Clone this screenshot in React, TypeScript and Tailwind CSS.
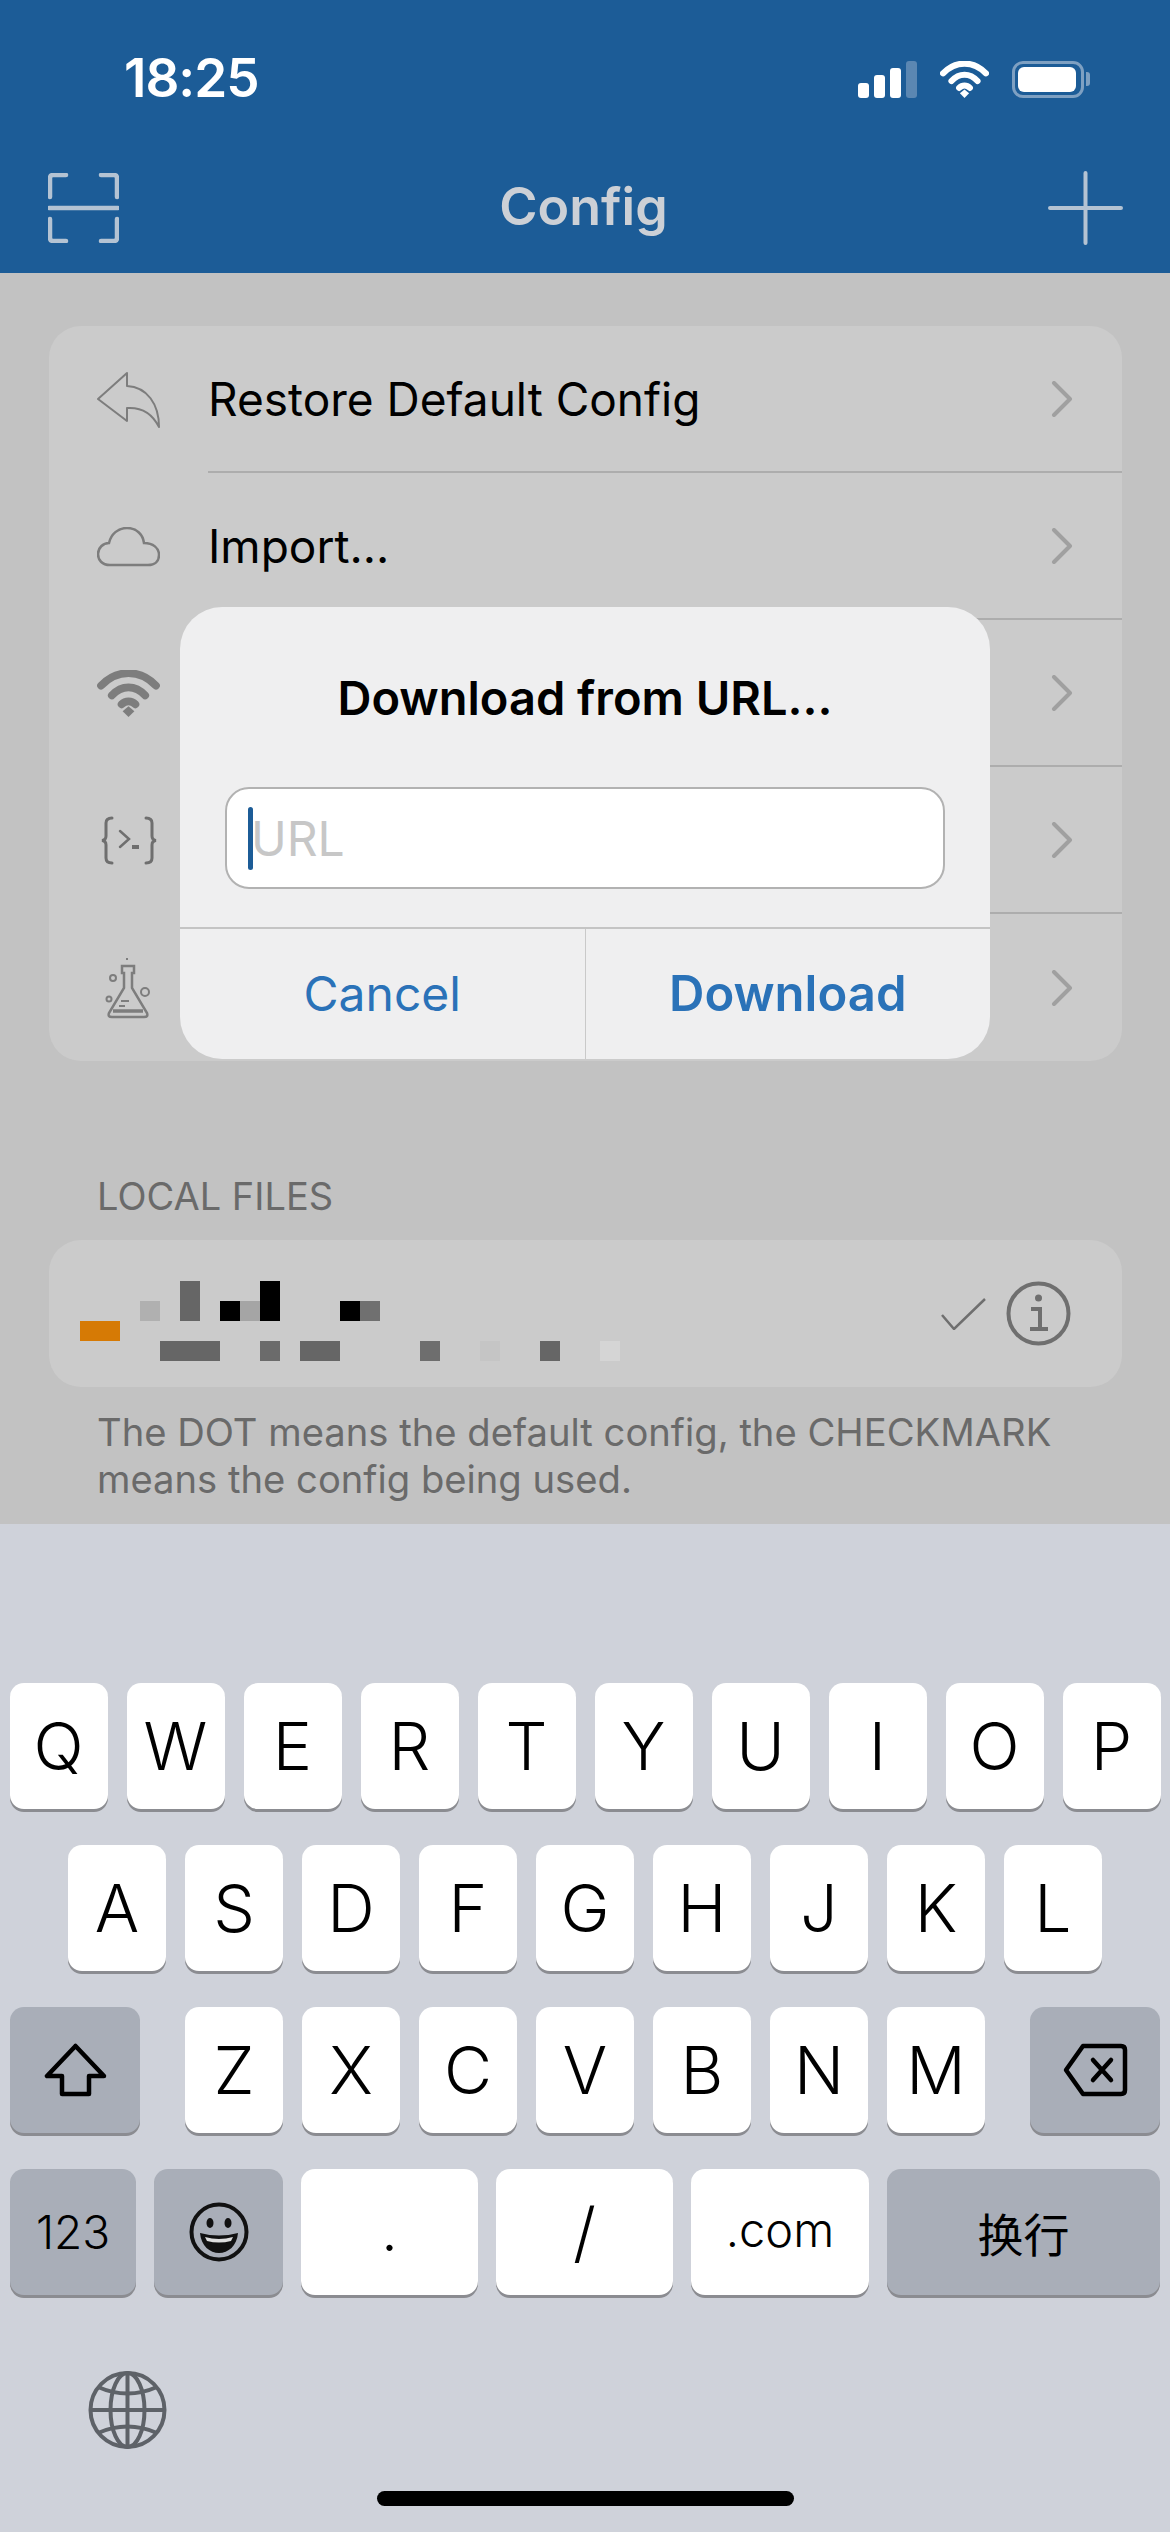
const font = "font-['Inter','Noto_Sans_CJK_SC',sans-serif]";

const ReplyIcon = () => (
  <svg width="63" height="56" viewBox="0 0 63 56" fill="none" stroke="#7d7d7d" strokeWidth="2" strokeLinejoin="round">
    <path d="M30 1 L1 27 L30 49 V36 C44 35 55 41 62 55 C62 32 50 15 30 14 Z" />
  </svg>
);

const CloudIcon = () => (
  <svg width="63" height="40" viewBox="0 0 63 40" fill="none" stroke="#7d7d7d" strokeWidth="2.5">
    <path d="M13 38 C5 38 1 33 1 27 C1 21 6 16 12 16 C14 7 21 1 30 1 C40 1 46 8 47 16 C56 16 62 21 62 28 C62 34 58 38 51 38 Z" />
  </svg>
);

const WifiIcon = ({ color, width, height }: { color: string; width: number; height: number }) => (
  <svg width={width} height={height} viewBox="0 0 64 48" fill="none" stroke={color} strokeWidth="8" strokeLinecap="round">
    <path d="M4 16 C20 -1 44 -1 60 16" />
    <path d="M15 26 C25 15 39 15 49 26" />
    <path d="M25 35 C29 31 35 31 39 35" />
    <path d="M32 37 L26 42 L32 48 L38 42 Z" fill={color} stroke="none" />
  </svg>
);

const ScriptIcon = () => (
  <svg width="58" height="49" viewBox="0 0 58 49" fill="none" stroke="#6f6f6f" strokeWidth="3" strokeLinecap="round">
    <path d="M12 2 Q6 2 6 7 V20 Q6 24 2 24.5 Q6 25 6 29 V42 Q6 47 12 47" />
    <path d="M46 2 Q52 2 52 7 V20 Q52 24 56 24.5 Q52 25 52 29 V42 Q52 47 46 47" />
    <path d="M20 15 L29 23 L20 31" strokeWidth="2.5" />
    <path d="M32 31 H39" strokeWidth="4" strokeLinecap="butt" />
  </svg>
);

const LabIcon = () => (
  <svg width="47" height="62" viewBox="0 0 47 62" fill="none" stroke="#7d7d7d" strokeWidth="2.5">
    <path d="M17 9 H29 V16 H27 V31 L42 56 C43 59 42 60 39 60 H7 C4 60 3 59 4 56 L19 31 V16 H17 Z" />
    <path d="M8 54 H38" strokeWidth="3.5" />
    <path d="M16 44 H24 M14 49 H20 M22 1 V3" strokeWidth="2" />
    <circle cx="8" cy="21" r="3" strokeWidth="2" />
    <circle cx="40" cy="35" r="4" strokeWidth="2" />
    <circle cx="4" cy="42" r="2.5" strokeWidth="2" />
  </svg>
);

const Chevron = () => (
  <svg width="22" height="36" viewBox="0 0 22 36" fill="none" stroke="#a0a0a0" strokeWidth="4" strokeLinecap="round" strokeLinejoin="round">
    <path d="M3 2 L19 18 L3 34" />
  </svg>
);

const menuRows = [
  { label: "Restore Default Config", icon: <ReplyIcon /> },
  { label: "Import...", icon: <CloudIcon /> },
  { label: "", icon: <WifiIcon color="#7d7d7d" width={63} height={47} /> },
  { label: "", icon: <ScriptIcon /> },
  { label: "", icon: <LabIcon /> },
];

const Key = ({ label, className }: { label: React.ReactNode; className: string }) => (
  <div className={`h-[126px] rounded-[14px] flex items-center justify-center text-black shadow-[0_3px_0_#8b8c91] ${className}`}>
    {label}
  </div>
);

const LetterRow = ({ letters }: { letters: string }) => (
  <div className="flex gap-[19px]">
    {letters.split("").map((l) => (
      <Key key={l} label={l} className="w-[98px] bg-white text-[66px] font-light" />
    ))}
  </div>
);

export default function App() {
  return (
    <div className={`w-[1170px] h-[2532px] flex flex-col overflow-hidden relative ${font}`}>
      {/* nav bar */}
      <div className="h-[273px] bg-[#1c5c97] shrink-0 flex flex-col">
        <div className="flex items-center justify-between h-[78px] mt-[40px] pl-[124px] pr-[80px]">
          <span className="text-[53px] font-semibold text-white tracking-[-1px]">18:25</span>
          <div className="flex items-center gap-[23px]">
            <div className="flex items-end gap-[5px] h-[37px]">
              <div className="w-[11px] h-[15px] bg-white rounded-[3px]" />
              <div className="w-[11px] h-[23px] bg-white rounded-[3px]" />
              <div className="w-[11px] h-[30px] bg-white rounded-[3px]" />
              <div className="w-[11px] h-[37px] bg-[#5b87b2] rounded-[3px]" />
            </div>
            <WifiIcon color="#ffffff" width={49} height={37} />
            <div className="flex items-center gap-[2px]">
              <div className="w-[72px] h-[37px] border-[3px] border-[#7ea0c2] rounded-[11px] p-[3px]">
                <div className="w-[58px] h-full bg-white rounded-[6px]" />
              </div>
              <div className="w-[4px] h-[14px] bg-[#7ea0c2] rounded-r-[3px]" />
            </div>
          </div>
        </div>
        <div className="flex items-center justify-between pl-[48px] pr-[47px] mt-[53px]">
          <svg width="71" height="70" viewBox="0 0 71 70" fill="none" stroke="#b4c3d3" strokeWidth="4.5" strokeLinecap="round">
            <path d="M2 24 V5 Q2 2 5 2 H18 M53 2 H66 Q69 2 69 5 V24 M2 46 V65 Q2 68 5 68 H18 M53 68 H66 Q69 68 69 65 V46" />
            <path d="M1 35 H70" />
          </svg>
          <span className="text-[52px] leading-none font-semibold text-[#ccd0d6] pb-[2px]">Config</span>
          <svg width="75" height="74" viewBox="0 0 75 74" fill="none" stroke="#b4c3d3" strokeWidth="4" strokeLinecap="round">
            <path d="M2 37 H73 M37.5 2 V72" />
          </svg>
        </div>
      </div>

      {/* dimmed config list */}
      <div className="h-[1251px] bg-[#c2c2c2] shrink-0 pt-[53px] px-[49px]">
        <div className="w-[1073px] bg-[#cbcbcb] rounded-[32px]">
          {menuRows.map((row, i) => (
            <div key={i} className="flex items-center h-[147px] pl-[48px]">
              <div className="w-[63px] flex justify-center shrink-0">{row.icon}</div>
              <div className={`flex-1 h-full ml-[48px] flex items-center justify-between pr-[49px] ${i < 4 ? "border-b-2 border-[#adadad]" : ""}`}>
                <span className="text-[46px] text-black pt-[2px]">{row.label}</span>
                <Chevron />
              </div>
            </div>
          ))}
        </div>

        <div className="text-[38px] text-[#6a6a6a] pl-[48px] mt-[113px] leading-[44px]">LOCAL FILES</div>

        <div className="w-[1073px] h-[147px] bg-[#cbcbcb] rounded-[32px] mt-[22px] flex items-center justify-between pr-[51px]">
          {/* blurred file name */}
          <svg width="620" height="147" viewBox="0 0 620 147">
            <rect x="31" y="81" width="40" height="20" fill="#d67a05" />
            <rect x="91" y="61" width="20" height="20" fill="#b0b0b0" />
            <rect x="131" y="41" width="20" height="40" fill="#666666" />
            <rect x="171" y="61" width="20" height="20" fill="#000000" />
            <rect x="191" y="61" width="20" height="20" fill="#a5a5a5" />
            <rect x="211" y="41" width="20" height="40" fill="#000000" />
            <rect x="291" y="61" width="20" height="20" fill="#000000" />
            <rect x="311" y="61" width="20" height="20" fill="#707070" />
            <rect x="111" y="101" width="60" height="20" fill="#666666" />
            <rect x="211" y="101" width="20" height="20" fill="#6b6b6b" />
            <rect x="251" y="101" width="40" height="20" fill="#666666" />
            <rect x="371" y="101" width="20" height="20" fill="#6e6e6e" />
            <rect x="431" y="101" width="20" height="20" fill="#c5c5c5" />
            <rect x="491" y="101" width="20" height="20" fill="#666666" />
            <rect x="551" y="101" width="20" height="20" fill="#d5d5d5" />
          </svg>
          <div className="flex items-center gap-[20px]">
            <svg width="45" height="32" viewBox="0 0 45 32" fill="none" stroke="#6f6f6f" strokeWidth="2.5">
              <path d="M1 17 L13 31 L44 1" />
            </svg>
            <svg width="65" height="65" viewBox="0 0 65 65" fill="none" stroke="#6f6f6f" strokeWidth="4">
              <circle cx="32.5" cy="32.5" r="30" />
              <circle cx="32.5" cy="17" r="3.5" fill="#6f6f6f" stroke="none" />
              <path d="M25 28 H34 V47 M24 48 H42" strokeWidth="4" />
            </svg>
          </div>
        </div>

        <p className="text-[38.2px] leading-[47px] text-[#6a6a6a] pl-[48px] mt-[22px]">
          The DOT means the default config, the CHECKMARK
          <br />
          means the config being used.
        </p>
      </div>

      {/* keyboard */}
      <div className="flex-1 bg-[#cfd2da] flex flex-col items-center pt-[159px] relative">
        <div className="flex flex-col gap-[36px] w-full">
          <div className="flex justify-center"><LetterRow letters="QWERTYUIOP" /></div>
          <div className="flex justify-center"><LetterRow letters="ASDFGHJKL" /></div>
          <div className="flex justify-between px-[10px]">
            <Key
              className="w-[130px] bg-[#a9aeb8]"
              label={
                <svg width="63" height="54" viewBox="0 0 63 54" fill="none" stroke="#000" strokeWidth="4.5" strokeLinejoin="round">
                  <path d="M31.5 3 L3 33 H18 V51 H45 V33 H60 Z" />
                </svg>
              }
            />
            <LetterRow letters="ZXCVBNM" />
            <Key
              className="w-[130px] bg-[#a9aeb8]"
              label={
                <svg width="65" height="54" viewBox="0 0 65 54" fill="none" stroke="#000" strokeWidth="4.5" strokeLinejoin="round" strokeLinecap="round">
                  <path d="M20 3 H58 Q62 3 62 7 V47 Q62 51 58 51 H20 L3 27 Z" />
                  <path d="M30 17 L48 37 M48 17 L30 37" />
                </svg>
              }
            />
          </div>
          <div className="flex gap-[18px] px-[10px]">
            <Key label="123" className="w-[126px] bg-[#a9aeb8] text-[46px] font-light" />
            <Key
              className="w-[129px] bg-[#a9aeb8]"
              label={
                <svg width="60" height="60" viewBox="0 0 60 60" fill="none" stroke="#111" strokeWidth="4">
                  <circle cx="30" cy="30" r="27.5" />
                  <ellipse cx="21" cy="21" rx="3.5" ry="5" fill="#111" stroke="none" />
                  <ellipse cx="39" cy="21" rx="3.5" ry="5" fill="#111" stroke="none" />
                  <path d="M11 31 Q30 36 49 31 C48 44 39 51 30 51 C21 51 12 44 11 31 Z" fill="#111" stroke="none" />
                  <path d="M16 35 Q30 39 44 35 L42 39 Q30 42 18 39 Z" fill="#ddd" stroke="none" />
                </svg>
              }
            />
            <Key label="." className="w-[177px] bg-white text-[60px] font-light pb-[6px]" />
            <Key label="/" className="w-[177px] bg-white text-[66px] font-light" />
            <Key label=".com" className="w-[178px] bg-white text-[47px] font-light pb-[4px]" />
            <Key label="换行" className="flex-1 bg-[#a9aeb8] text-[46px] pt-[6px]" />
          </div>
        </div>
        <div className="self-start ml-[88px] mt-[75px]">
          <svg width="79" height="80" viewBox="0 0 79 80" fill="none" stroke="#5e6268" strokeWidth="4">
            <circle cx="39.5" cy="40" r="37" />
            <ellipse cx="39.5" cy="40" rx="17" ry="37" />
            <path d="M39.5 3 V77 M2.5 40 H76.5" />
            <path d="M10 17 Q39.5 30 69 17 M10 63 Q39.5 50 69 63" />
          </svg>
        </div>
        <div className="w-[417px] h-[15px] bg-black rounded-full mt-[41px]" />
      </div>

      {/* alert over the list */}
      <div className="absolute left-[180px] top-[607px] w-[810px] h-[452px] bg-[#efeff0] rounded-[42px] flex flex-col">
        <div className="text-center text-[47px] font-semibold text-black mt-[61px] leading-[60px]">Download from URL...</div>
        <div className="mx-[45px] mt-[59px] h-[102px] bg-white border-2 border-[#b2b2b2] rounded-[24px] flex items-center pl-[21px]">
          <div className="w-[5px] h-[63px] bg-[#1c5c97] rounded-full" />
          <span className="text-[48px] text-[#c7c7c7] -ml-[2px] pt-[2px]">URL</span>
        </div>
        <div className="mt-[38px] flex-1 flex border-t-2 border-[#c4c4c4]">
          <div className="flex-1 flex items-center justify-center text-[48px] text-[#2a72b8] border-r border-[#c9c9c9]">Cancel</div>
          <div className="flex-1 flex items-center justify-center text-[49px] font-semibold text-[#2a72b8]">Download</div>
        </div>
      </div>
    </div>
  );
}
